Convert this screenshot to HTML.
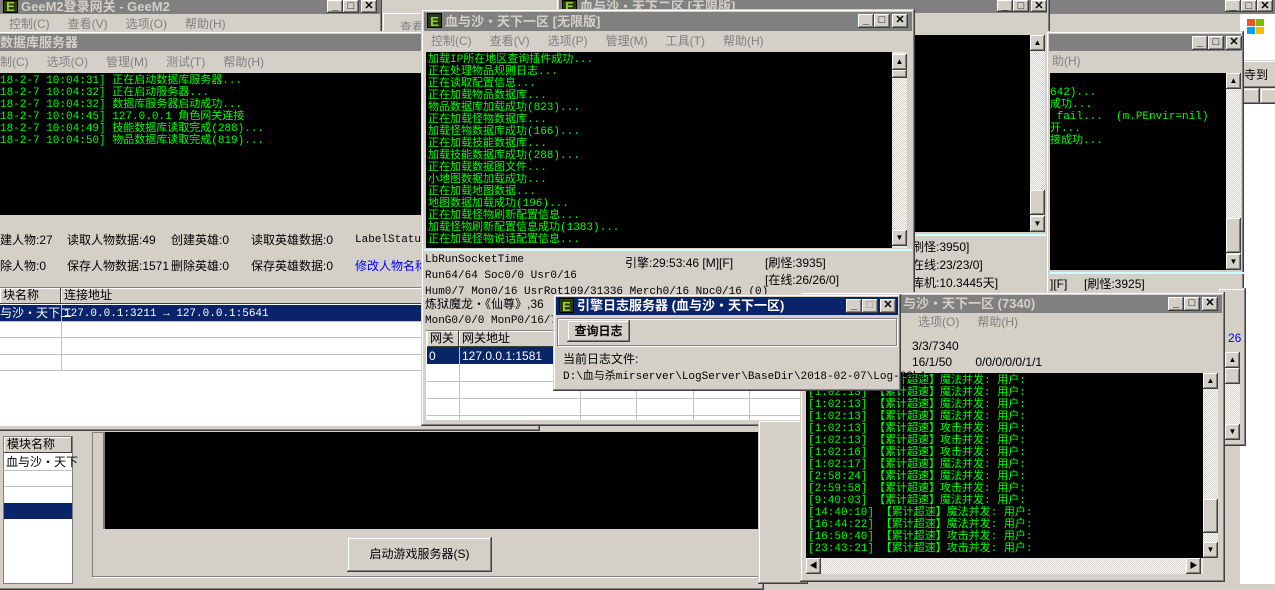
<!DOCTYPE html>
<html><head><meta charset="utf-8">
<style>
*{margin:0;padding:0;box-sizing:border-box}
body{width:1275px;height:584px;overflow:hidden;position:relative;background:#d4d0c8;font-family:"Liberation Sans","WenQuanYi Zen Hei","Noto Sans CJK SC",sans-serif;font-size:12px;color:#000}
.a{position:absolute}
.win{position:absolute;background:#d4d0c8;box-shadow:inset -1px -1px #404040,inset 1px 1px #d4d0c8,inset -2px -2px #808080,inset 2px 2px #fff}
.tb{position:absolute;background:#808080;color:#d4d0c8;font-weight:bold;font-size:13px;line-height:17px;white-space:nowrap;overflow:hidden}
.act{background:#0a246a;color:#fff}
.bt{position:absolute;width:16px;height:14px;background:#d4d0c8;box-shadow:inset -1px -1px #404040,inset 1px 1px #fff,inset -2px -2px #808080;font-size:11px;line-height:13px;text-align:center;color:#000;font-weight:bold}
.ic{display:inline-block;width:15px;height:15px;background:#2a3a10;color:#9acd32;font:bold 13px/15px "Liberation Sans",sans-serif;text-align:center;vertical-align:top;margin:1px 3px 0 3px;border:1px solid #000}
.blk{position:absolute;background:#000;color:#00ff00;font-family:"Liberation Mono","WenQuanYi Zen Hei",monospace;font-size:11px;line-height:12px;white-space:pre;overflow:hidden}
.sb{position:absolute;width:15px;background:repeating-conic-gradient(#fff 0 25%,#d4d0c8 0 50%) 0 0/2px 2px}
.ar{position:absolute;left:0;width:15px;height:16px;background:#d4d0c8;box-shadow:inset -1px -1px #404040,inset 1px 1px #fff,inset -2px -2px #808080;font-size:8px;line-height:16px;text-align:center}
.menu{position:absolute;color:#808080;font-size:12px;line-height:18px;white-space:nowrap;word-spacing:0}
.menu span{margin-right:18px}
.t{position:absolute;white-space:nowrap;font-size:12px;line-height:14px}
.m{font-family:"Liberation Mono","WenQuanYi Zen Hei",monospace;font-size:11px}
.wh{position:absolute;background:#fff}
.sel{position:absolute;background:#0a246a;color:#fff}
.hl{position:absolute;background:#c0c0c0;height:1px}
.vl{position:absolute;background:#c0c0c0;width:1px}
.hdr{position:absolute;background:#d4d0c8;box-shadow:inset -1px -1px #404040,inset 1px 1px #fff;font-size:12px;line-height:15px;padding-left:3px}
</style></head><body>

<!-- far right white -->
<div class="wh a" style="left:1240px;top:14px;width:35px;height:570px"></div>
<!-- window B top right -->
<div class="tb" style="left:1050px;top:0;width:225px;height:14px"></div>
<div class="bt" style="left:1225px;top:0;height:12px">_</div><div class="bt" style="left:1241px;top:0;height:12px">□</div><div class="bt" style="left:1257px;top:0;height:12px">✕</div>
<div class="a" style="left:1245px;top:18px;width:20px;height:18px">
<div class="a" style="left:2px;top:1px;width:8px;height:7px;background:#f25022"></div><div class="a" style="left:11px;top:1px;width:8px;height:7px;background:#7fba00"></div><div class="a" style="left:2px;top:9px;width:8px;height:7px;background:#00a4ef"></div><div class="a" style="left:11px;top:9px;width:8px;height:7px;background:#ffb900"></div></div>
<div class="win" style="left:1240px;top:60px;width:40px;height:28px"></div>
<div class="t" style="left:1244px;top:68px">寺到</div>
<div class="win" style="left:1240px;top:88px;width:20px;height:16px"></div><div class="win" style="left:1260px;top:88px;width:20px;height:16px"></div>

<!-- window A (天下二区) -->
<div class="win" style="left:556px;top:-4px;width:494px;height:300px"></div>
<div class="tb" style="left:559px;top:0;width:488px;height:13px;line-height:13px"><span class="ic" style="height:12px;line-height:11px;margin-top:0">E</span>血与沙・天下二区 [无限版]</div>
<div class="bt" style="left:997px;top:0;height:12px">_</div><div class="bt" style="left:1013px;top:0;height:12px">□</div><div class="bt" style="left:1031px;top:0;height:12px">✕</div>
<div class="blk" style="left:913px;top:35px;width:117px;height:197px"></div>
<div class="sb" style="left:1030px;top:35px;height:197px"><div class="ar" style="top:0">▲</div><div class="ar" style="top:155px;height:25px"></div><div class="ar" style="top:181px">▼</div></div>
<div class="a" style="left:913px;top:234px;width:135px;height:2px;background:#cff"></div>
<div class="t" style="left:912px;top:240px">刷怪:3950]</div>
<div class="t" style="left:912px;top:258px">在线:23/23/0]</div>
<div class="t" style="left:912px;top:276px">库机:10.3445天]</div>

<!-- window C -->
<div class="win" style="left:1046px;top:31px;width:198px;height:264px"></div>
<div class="tb" style="left:1049px;top:34px;width:192px;height:17px"></div>
<div class="bt" style="left:1192px;top:36px">_</div><div class="bt" style="left:1208px;top:36px">□</div><div class="bt" style="left:1226px;top:36px">✕</div>
<div class="menu" style="left:1052px;top:52px">助(H)</div>
<div class="blk" style="left:1050px;top:73px;width:176px;height:197px;padding-top:14px">642)...
成功...
 fail...  (m.PEnvir=nil)
开...
接成功...</div>
<div class="sb" style="left:1226px;top:73px;height:197px"><div class="ar" style="top:0">▲</div><div class="ar" style="top:145px;height:35px"></div><div class="ar" style="top:181px">▼</div></div>
<div class="a" style="left:1050px;top:272px;width:194px;height:2px;background:#cff"></div>
<div class="t" style="left:1050px;top:277px">][F]&nbsp;&nbsp;&nbsp;&nbsp;&nbsp;[刷怪:3925]</div>

<!-- strip right of D -->
<div class="win" style="left:1218px;top:288px;width:28px;height:158px"></div>
<div class="t" style="left:1228px;top:331px;color:#00f">26</div>
<div class="sb" style="left:1225px;top:352px;height:88px"><div class="ar" style="top:0">▲</div><div class="ar" style="top:16px;height:16px"></div><div class="ar" style="top:72px">▼</div></div>

<!-- Gee M2 login window -->
<div class="win" style="left:-4px;top:-4px;width:386px;height:38px"></div>
<div class="tb" style="left:0;top:0;width:380px;height:14px;line-height:14px"><span class="ic" style="height:13px;line-height:12px;margin-top:0">E</span>GeeM2登录网关 - GeeM2</div>
<div class="bt" style="left:327px;top:0;height:13px">_</div><div class="bt" style="left:343px;top:0;height:13px">□</div><div class="bt" style="left:361px;top:0;height:13px">✕</div>
<div class="menu" style="left:9px;top:15px"><span>控制(C)</span><span>查看(V)</span><span>选项(O)</span><span>帮助(H)</span></div>
<div class="win" style="left:382px;top:12px;width:45px;height:22px"></div>
<div class="menu" style="left:400px;top:18px">查看</div>

<!-- bottom-left window -->
<div class="win" style="left:-4px;top:424px;width:768px;height:166px"></div>
<div class="wh" style="left:3px;top:436px;width:70px;height:148px;border:1px solid #808080"></div>
<div class="hdr" style="left:4px;top:437px;width:68px;height:16px">模块名称</div>
<div class="t" style="left:6px;top:455px">血与沙・天下</div>
<div class="hl" style="left:4px;top:470px;width:68px"></div><div class="hl" style="left:4px;top:486px;width:68px"></div>
<div class="sel" style="left:4px;top:503px;width:68px;height:16px"></div>
<div class="a" style="left:92px;top:432px;width:670px;height:145px;border:1px solid #808080;box-shadow:1px 1px #fff"></div>
<div class="a" style="left:103px;top:432px;width:655px;height:97px;background:#000;border-left:2px solid #808080"></div>
<div class="win" style="left:347px;top:537px;width:145px;height:35px;line-height:35px;text-align:center">启动游戏服务器(S)</div>

<!-- DB window -->
<div class="win" style="left:-4px;top:31px;width:544px;height:400px"></div>
<div class="tb" style="left:0;top:34px;width:537px;height:17px">数据库服务器</div>
<div class="bt" style="left:1190px;top:36px;display:none"></div>
<div class="menu" style="left:0;top:53px"><span>制(C)</span><span>选项(O)</span><span>管理(M)</span><span>测试(T)</span><span>帮助(H)</span></div>
<div class="blk" style="left:0;top:73px;width:537px;height:142px;padding-top:2px">18-2-7 10:04:31] 正在启动数据库服务器...
18-2-7 10:04:32] 正在启动服务器...
18-2-7 10:04:32] 数据库服务器启动成功...
18-2-7 10:04:45] 127.0.0.1 角色网关连接
18-2-7 10:04:49] 技能数据库读取完成(288)...
18-2-7 10:04:50] 物品数据库读取完成(819)...</div>
<div class="t" style="left:0;top:233px">建人物:27</div><div class="t" style="left:67px;top:233px">读取人物数据:49</div><div class="t" style="left:171px;top:233px">创建英雄:0</div><div class="t" style="left:251px;top:233px">读取英雄数据:0</div><div class="t m" style="left:355px;top:233px">LabelStatus</div>
<div class="t" style="left:0;top:259px">除人物:0</div><div class="t" style="left:67px;top:259px">保存人物数据:1571</div><div class="t" style="left:171px;top:259px">删除英雄:0</div><div class="t" style="left:251px;top:259px">保存英雄数据:0</div><div class="t" style="left:355px;top:259px;color:#00f">修改人物名称</div>
<div class="wh" style="left:0;top:287px;width:537px;height:139px;border-top:1px solid #808080"></div>
<div class="hdr" style="left:0;top:288px;width:61px;height:16px">块名称</div><div class="hdr" style="left:61px;top:288px;width:476px;height:16px">连接地址</div>
<div class="sel" style="left:0;top:305px;width:537px;height:16px"></div>
<div class="t" style="left:0;top:306px;color:#fff">与沙・天下二</div><div class="t m" style="left:64px;top:307px;color:#fff">127.0.0.1:3211 → 127.0.0.1:5641</div>
<div class="vl" style="left:61px;top:305px;height:66px"></div>
<div class="hl" style="left:0;top:321px;width:537px"></div><div class="hl" style="left:0;top:337px;width:537px"></div><div class="hl" style="left:0;top:354px;width:537px"></div><div class="hl" style="left:0;top:370px;width:537px"></div>

<!-- Main window -->
<div class="win" style="left:421px;top:9px;width:494px;height:417px"></div>
<div class="tb" style="left:424px;top:12px;width:488px;height:19px;line-height:19px"><span class="ic">E</span>血与沙・天下一区 [无限版]</div>
<div class="bt" style="left:858px;top:14px">_</div><div class="bt" style="left:874px;top:14px">□</div><div class="bt" style="left:892px;top:14px">✕</div>
<div class="menu" style="left:431px;top:32px"><span>控制(C)</span><span>查看(V)</span><span>选项(P)</span><span>管理(M)</span><span>工具(T)</span><span>帮助(H)</span></div>
<div class="blk" style="left:426px;top:52px;width:466px;height:196px;padding:2px 0 0 2px">加载IP所在地区查询插件成功...
正在处理物品规则日志...
正在读取配置信息...
正在加载物品数据库...
物品数据库加载成功(823)...
正在加载怪物数据库...
加载怪物数据库成功(166)...
正在加载技能数据库...
加载技能数据库成功(288)...
正在加载数据图文件...
小地图数据加载成功...
正在加载地图数据...
地图数据加载成功(196)...
正在加载怪物刷新配置信息...
加载怪物刷新配置信息成功(1383)...
正在加载怪物说话配置信息...</div>
<div class="sb" style="left:892px;top:52px;height:196px"><div class="ar" style="top:2px">▲</div><div class="ar" style="top:18px;height:8px"></div><div class="ar" style="top:178px">▼</div></div>
<div class="a" style="left:424px;top:249px;width:488px;height:2px;background:#cff"></div>
<div class="t m" style="left:425px;top:253px">LbRunSocketTime</div>
<div class="t m" style="left:425px;top:269px">Run64/64 Soc0/0 Usr0/16</div>
<div class="t m" style="left:425px;top:285px">Hum0/7 Mon0/16 UsrRot109/31336 Merch0/16 Npc0/16 (0)</div>
<div class="t" style="left:425px;top:297px">炼狱魔龙・《仙尊》,36</div>
<div class="t m" style="left:425px;top:314px">MonG0/0/0 MonP0/16/78</div>
<div class="t" style="left:625px;top:256px">引擎:29:53:46 [M][F]</div>
<div class="t" style="left:765px;top:256px">[刷怪:3935]</div>
<div class="t" style="left:765px;top:273px">[在线:26/26/0]</div>
<div class="wh" style="left:426px;top:330px;width:466px;height:90px;border-top:1px solid #808080"></div>
<div class="hdr" style="left:427px;top:331px;width:32px;height:16px">网关</div><div class="hdr" style="left:459px;top:331px;width:430px;height:16px">网关地址</div>
<div class="sel" style="left:427px;top:347px;width:465px;height:17px"></div>
<div class="t" style="left:429px;top:349px;color:#fff">0</div><div class="t" style="left:462px;top:349px;color:#fff">127.0.0.1:1581</div>
<div class="vl" style="left:459px;top:347px;height:73px"></div><div class="vl" style="left:580px;top:364px;height:56px"></div><div class="vl" style="left:636px;top:364px;height:56px"></div><div class="vl" style="left:693px;top:364px;height:56px"></div><div class="vl" style="left:749px;top:364px;height:56px"></div><div class="vl" style="left:815px;top:364px;height:56px"></div><div class="vl" style="left:875px;top:364px;height:56px"></div>
<div class="hl" style="left:427px;top:381px;width:465px"></div><div class="hl" style="left:427px;top:398px;width:465px"></div><div class="hl" style="left:427px;top:415px;width:465px"></div>
<div class="sb" style="left:892px;top:331px;height:89px"><div class="ar" style="top:73px">▼</div></div>

<!-- windows left of D -->
<div class="win" style="left:758px;top:420px;width:50px;height:164px"></div>

<!-- Window D -->
<div class="win" style="left:800px;top:292px;width:425px;height:290px"></div>
<div class="tb" style="left:803px;top:295px;width:419px;height:18px;line-height:18px;padding-left:100px">与沙・天下一区 (7340)</div>
<div class="bt" style="left:1168px;top:297px">_</div><div class="bt" style="left:1184px;top:297px">□</div><div class="bt" style="left:1202px;top:297px">✕</div>
<div class="menu" style="left:918px;top:313px"><span>选项(O)</span><span>帮助(H)</span></div>
<div class="t" style="left:912px;top:339px">3/3/7340</div>
<div class="t" style="left:912px;top:355px">16/1/50&nbsp;&nbsp;&nbsp;&nbsp;&nbsp;&nbsp;&nbsp;0/0/0/0/0/1/1</div>
<div class="blk" style="left:806px;top:373px;width:397px;height:185px;padding:2px 0 0 2px">[1:02:13] 【累计超速】魔法并发: 用户:
[1:02:13] 【累计超速】魔法并发: 用户:
[1:02:13] 【累计超速】魔法并发: 用户:
[1:02:13] 【累计超速】魔法并发: 用户:
[1:02:13] 【累计超速】攻击并发: 用户:
[1:02:13] 【累计超速】攻击并发: 用户:
[1:02:16] 【累计超速】攻击并发: 用户:
[1:02:17] 【累计超速】魔法并发: 用户:
[2:58:24] 【累计超速】魔法并发: 用户:
[2:59:58] 【累计超速】攻击并发: 用户:
[9:40:03] 【累计超速】魔法并发: 用户:
[14:40:10] 【累计超速】魔法并发: 用户:
[16:44:22] 【累计超速】魔法并发: 用户:
[16:50:40] 【累计超速】攻击并发: 用户:
[23:43:21] 【累计超速】攻击并发: 用户:</div>
<div class="sb" style="left:1203px;top:373px;height:185px"><div class="ar" style="top:0">▲</div><div class="ar" style="top:126px;height:34px"></div><div class="ar" style="top:169px">▼</div></div>
<div class="a" style="left:806px;top:558px;width:397px;height:16px;background:repeating-conic-gradient(#fff 0 25%,#d4d0c8 0 50%) 0 0/2px 2px"><div class="ar" style="left:0;top:0">◀</div><div class="ar" style="left:380px;top:0">▶</div></div>

<!-- Log server dialog -->
<div class="win" style="left:553px;top:294px;width:348px;height:97px"></div>
<div class="tb act" style="left:556px;top:297px;width:342px;height:18px;line-height:18px"><span class="ic">E</span>引擎日志服务器 (血与沙・天下一区)</div>
<div class="bt" style="left:846px;top:299px">_</div><div class="bt" style="left:862px;top:299px;color:#808080">□</div><div class="bt" style="left:880px;top:299px">✕</div>
<div class="a" style="left:557px;top:318px;width:340px;height:28px;border:1px solid #808080;box-shadow:inset 1px 1px #fff,1px 1px #fff"></div>
<div class="win" style="left:567px;top:320px;width:63px;height:22px;text-align:center;line-height:22px;font-weight:bold">查询日志</div>
<div class="t" style="left:563px;top:352px">当前日志文件:</div>
<div class="t m" style="left:563px;top:370px">D:\血与杀mirserver\LogServer\BaseDir\2018-02-07\Log-23h1</div>

</body></html>
